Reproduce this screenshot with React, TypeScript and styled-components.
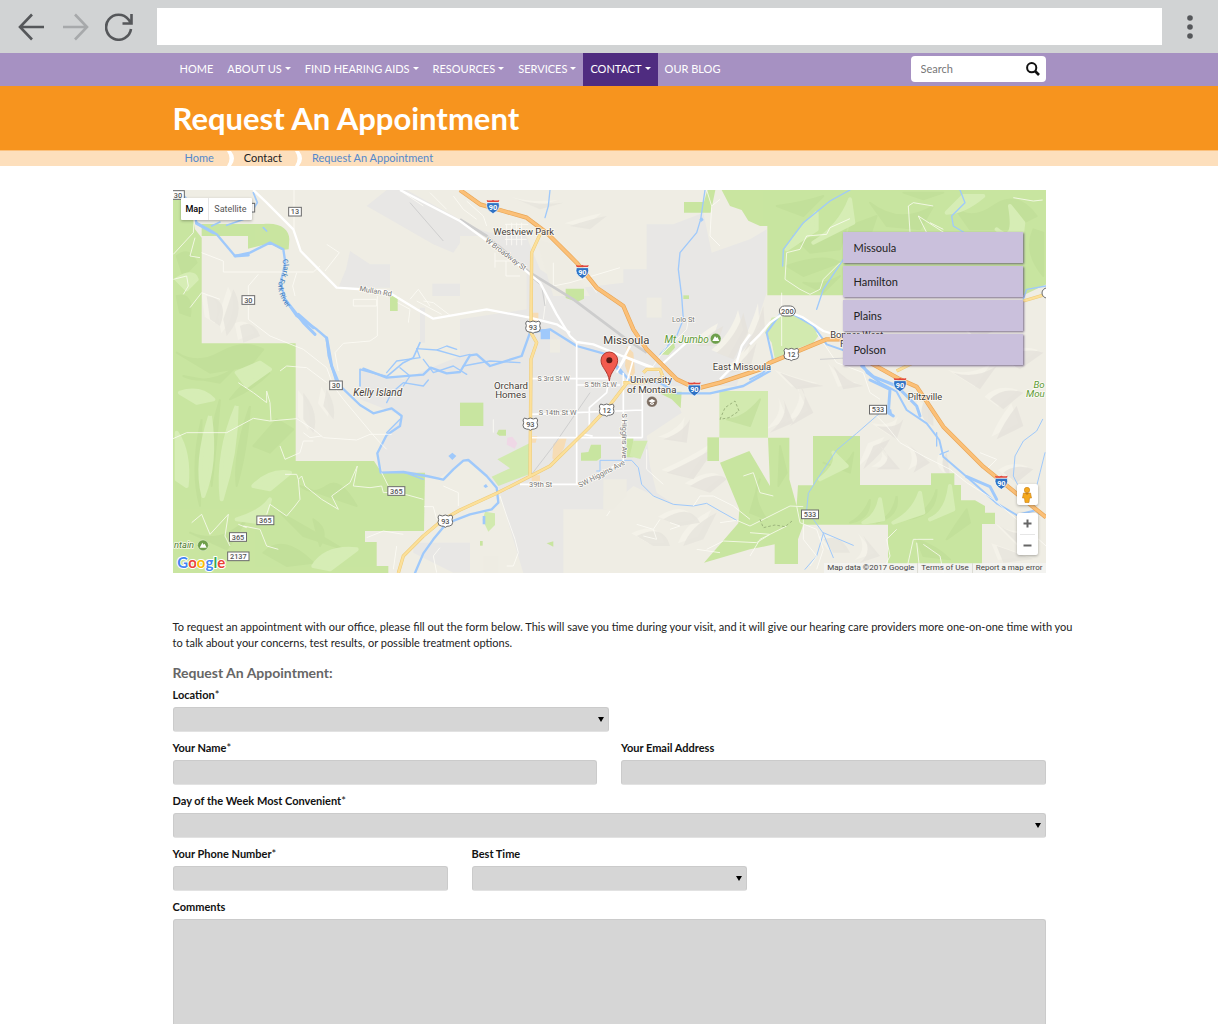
import React from "react";
import styled, { createGlobalStyle } from "styled-components";

const GlobalStyle = createGlobalStyle`
  *, *::before, *::after { box-sizing: border-box; }
  body { margin: 0; background: #fff; color: #222; font-family: Lato, "Liberation Sans", sans-serif; font-size: 11px; line-height: 16px; }
  button, input, select, textarea { font: inherit; color: inherit; }
`;

/* ---------- Browser frame ---------- */

const Window = styled.div`
  display: flex;
  flex-direction: column;
  height: 100vh;
`;

const Toolbar = styled.div`
  flex: none;
  display: flex;
  align-items: center;
  height: 53px;
  padding: 0 16px 0 18px;
  gap: 16px;
  background: #d1d3d4;
`;

const ToolButton = styled.button<{ $dim?: boolean }>`
  display: flex;
  padding: 0;
  border: 0;
  background: none;
  color: ${(p) => (p.$dim ? "#a7a9ab" : "#55575a")};
`;

const AddressBar = styled.input`
  flex: 1;
  min-width: 0;
  height: 37px;
  margin: 0 0 0 8px;
  padding: 0 12px;
  border: 0;
  background: #fff;
  font-size: 15px;
`;

const Viewport = styled.div`
  flex: 1;
  min-height: 0;
  overflow-y: auto;
  overflow-x: hidden;
  scrollbar-width: none;
`;

/* ---------- Site header ---------- */

const Container = styled.div`
  width: 100%;
  max-width: 873px;
  margin: 0 auto;
`;

const NavBand = styled.header`
  background: #a691c2;
`;

const NavRow = styled(Container)`
  display: flex;
  align-items: center;
  justify-content: space-between;
`;

const NavList = styled.ul`
  display: flex;
  margin: 0;
  padding: 0;
  list-style: none;
`;

const NavLink = styled.a<{ $active?: boolean }>`
  display: flex;
  align-items: center;
  gap: 3px;
  height: 33px;
  padding: 0 7px 2px;
  background: ${(p) => (p.$active ? "#4f2c80" : "transparent")};
  color: #fff;
  text-decoration: none;
  white-space: nowrap;
`;

const Caret = styled.span`
  border: 3px solid transparent;
  border-top-color: currentColor;
  border-bottom: 0;
`;

const SearchForm = styled.form`
  display: flex;
  align-items: center;
  width: 135px;
  height: 26px;
  margin-bottom: 1px;
  padding: 0 6px 0 10px;
  border-radius: 4px;
  background: #fff;
`;

const SearchInput = styled.input`
  flex: 1;
  min-width: 0;
  padding: 0;
  border: 0;
  outline: 0;
  background: none;
  &::placeholder { color: #777; }
`;

const SearchButton = styled.button`
  display: flex;
  padding: 0;
  border: 0;
  background: none;
  color: #111;
`;

const TitleBand = styled.div`
  background: #f7941e;
`;

const Title = styled.h1`
  margin: 0;
  padding: 12px 0;
  color: #fff;
  font-size: 31px;
  line-height: 40px;
  font-weight: 700;
`;

const CrumbBand = styled.nav`
  border-top: 1px solid #fbc07c;
  background: #fddfbc;
`;

const CrumbList = styled.ol`
  display: flex;
  align-items: center;
  gap: 10px;
  height: 15px;
  margin: 0;
  padding: 0 12px;
  list-style: none;
`;

const Crumb = styled.li`
  display: flex;
  align-items: center;
  gap: 13px;
  line-height: 14px;
`;

const CrumbLink = styled.a<{ $dark?: boolean }>`
  padding-bottom: 1px;
  color: ${(p) => (p.$dark ? "#222" : "#5488cb")};
  text-decoration: none;
`;

/* ---------- Map ---------- */

const Main = styled.main`
  padding: 24px 0;
`;

const MapFrame = styled.section`
  position: relative;
  height: 383px;
  overflow: hidden;
  background: #efede4;
  font-family: Roboto, "Liberation Sans", sans-serif;
`;

const MapCanvas = styled.svg`
  display: block;
  width: 100%;
  height: 100%;
`;

const MapTypes = styled.div`
  position: absolute;
  top: 8px;
  left: 8px;
  display: flex;
  height: 22px;
  border-radius: 1px;
  background: #fff;
  box-shadow: 0 1px 3px rgba(0, 0, 0, 0.3);
`;

const MapType = styled.button<{ $on?: boolean }>`
  padding: 0 5px;
  border: 0;
  border-left: ${(p) => (p.$on ? "0" : "1px solid #e6e6e6")};
  background: none;
  font-size: 9px;
  font-weight: ${(p) => (p.$on ? 500 : 400)};
  color: ${(p) => (p.$on ? "#000" : "#565656")};
`;

const Offices = styled.div`
  position: absolute;
  top: 42px;
  right: 23px;
  display: flex;
  flex-direction: column;
  gap: 3px;
  width: 180px;
`;

const Office = styled.button`
  height: 31px;
  padding: 0 11px;
  border: 0;
  background: #cac0dc;
  box-shadow: 1px 1px 2px rgba(60, 40, 90, 0.65);
  color: #222;
  font-family: Lato, "Liberation Sans", sans-serif;
  text-align: left;
`;

const MapTools = styled.div`
  position: absolute;
  right: 8px;
  bottom: 18px;
  display: flex;
  flex-direction: column;
  gap: 8px;
  width: 21px;
`;

const ToolCard = styled.div`
  display: flex;
  flex-direction: column;
  padding: 0 3px;
  border-radius: 2px;
  background: #fff;
  box-shadow: 0 1px 3px rgba(0, 0, 0, 0.3);
`;

const MapTool = styled.button`
  display: flex;
  align-items: center;
  justify-content: center;
  height: 21px;
  padding: 0;
  border: 0;
  background: none;
  & + & { border-top: 1px solid #e6e6e6; }
`;

const Attribution = styled.div`
  position: absolute;
  right: 0;
  bottom: 0;
  display: flex;
  height: 10px;
  background: rgba(245, 245, 245, 0.7);
  color: #444;
  font-size: 8px;
  line-height: 10px;
`;

const Credit = styled.span`
  padding: 0 3px;
  & + & { border-left: 1px solid #dcdcd4; }
  a { color: inherit; text-decoration: none; }
`;

/* ---------- Form ---------- */

/* The opening copy runs a little wider than the column of fields. */
const Intro = styled.p`
  margin: 46px -32px 12px 0;
`;

const FormTitle = styled.h2`
  margin: 0 0 4px;
  color: #666;
  font-size: 14px;
  line-height: 20px;
  font-weight: 700;
`;

const Form = styled.form`
  display: flex;
  flex-direction: column;
  gap: 8px;
`;

const Row = styled.div<{ $cols: number; $gap?: number }>`
  display: grid;
  grid-template-columns: repeat(${(p) => p.$cols}, minmax(0, 1fr));
  gap: ${(p) => p.$gap ?? 24}px;
`;

const Field = styled.div`
  display: flex;
  flex-direction: column;
  gap: 4px;
`;

const Label = styled.label`
  color: #111;
  font-weight: 700;
`;

const Star = styled.span`
  font-weight: 400;
`;

const Control = styled.input`
  width: 100%;
  height: 25px;
  padding: 2px 8px;
  border: 1px solid #cbcbcb;
  border-bottom-color: #e2e2e2;
  border-radius: 3px;
  background: #d6d6d6;
`;

const SelectWrap = styled.div`
  position: relative;
  &::after {
    content: "";
    position: absolute;
    top: 10px;
    right: 5px;
    border: 3px solid transparent;
    border-top: 5px solid #000;
    border-bottom: 0;
    pointer-events: none;
  }
`;

const SelectControl = styled(Control)`
  display: block;
  appearance: none;
`;

const TextControl = styled(Control)`
  display: block;
  height: 160px;
  resize: none;
`;

/* ---------- Map artwork ---------- */

const GREEN = "#c9e5a0";
const WATER = "#9fc9fb";

const parks = [
  "M9 40H60L75 130L95 155V472H377V825H612L635 860H765L762 1035H585V1068H620V1140H655V1161H9Z",
  "M95 114H280C330 108 358 130 358 160L356 190L335 192L300 172L234 188V150H95Z",
  "M660 330h23v45h-23Z",
  "M870 650h70v70h-70Z",
  "M1542 48h60l10 -36h24l-14 68h-80Z",
  "M1655 12H2640V290L2560 328H1792V120H1770L1735 104L1715 72L1680 60Z",
  "M1187 308h55v30l-20 10l-35 -12Z",
  "M1540 328h17v11h-17Z",
  "M1512 470L1470 505L1495 507L1515 485Z",
  "M1460 617H1535L1532 667L1505 640Z",
  "M1612 754h35v71h-35Z",
  "M1650 830L1738 795L1800 900L1794 755H1858V880L1880 960L1884 898H1929V750H2070V897H2283V862H2353V897H2373V943H2415L2445 960V980H2475V1014H2436V1134H2154V1016H1900L1884 1060V1134H1814V1075L1740 1090L1602 1130L1705 1012L1708 970Z",
  "M1370 754h20v60h-20Z",
  "M1233 800l22 -2l8 -22h30v40l-12 8h-48Z",
  "M1008 757v-8h-20l-8 -6l6 -12h22Z",
  "M930 1065h8v14h-8Z",
  "M1130 1072l20 -6v16Z",
];

const paleParks = [
  "M1648 615h146v140h-146Z",
  "M1390 764h43l-22 55l-32 -8Z",
  "M982 820L1078 772V865L985 900L965 872L1020 847Z",
  "M945 977L975 982V1017L955 1037L938 1002Z",
  "M1805 395L1865 385L1925 410L1945 450L1930 470L1860 495L1815 520L1805 470L1785 440Z",
];

const urban = [
  "M870 110L960 140L1060 130L1110 250L1200 310L1360 290V250H1430V115H1510L1600 80L1625 200L1740 160L1790 130V320L1740 470L1700 600H1500L1535 680L1430 750L1440 840L1460 920L1520 960L1390 900L1310 970H1180V1161H1060L1000 960L985 900L890 820L800 880L640 860L620 800L650 740L700 690L570 640L570 545L700 580L870 510V430Z",
  "M540 195L600 235H660V305H505L528 250Z",
  "M787 293h100v37h-100Z",
  "M750 365h15v105h-15Z",
  "M650 12H710L905 120L850 200L790 175L590 60Z",
  "M730 1070h170v90h-50l-120 -60Z",
];

const clearings = [
  "M870 150L960 150L1070 260V370L870 400Z",
  "M1300 880h70v50l-40 40h-30Z",
  "M1140 460h30v40h-30Z",
  "M1430 335h45v60h-45Z",
  "M940 1110h45v50h-45Z",
  "M1100 160L1170 180L1260 330H1150Z",
];

/* Terrain relief: slivers of shade and light, each filled from crest to foot. */
const greenShade = [
  "M95 700Q60 850 90 960Q90 850 95 700M150 640Q110 760 125 900Q140 760 150 640M240 660Q190 800 200 900Q230 800 240 660M300 560Q230 570 180 640Q250 610 300 560",
  "M20 500Q80 540 150 500T280 490L240 540L120 560ZM40 570Q110 600 190 550L150 590Z",
  "M390 900Q430 930 470 900T560 960L500 940ZM330 980Q420 1030 520 1090L400 1050ZM60 1040Q150 1080 230 1000L170 1090Z",
  "M280 1100Q340 1040 430 1130L350 1140ZM430 1000Q480 1030 450 1080ZM250 780L320 700L370 730L300 800Z",
  "M1820 60Q1900 50 1960 30L1900 90ZM1870 150Q1990 180 2040 90L2010 190L1920 200ZM1850 240Q1960 200 2010 230L1900 270ZM2100 50Q2190 120 2290 60L2250 130L2150 120Z",
  "M2350 60Q2400 110 2470 60T2600 90L2520 130L2400 130ZM2590 130Q2560 200 2620 270V140ZM2200 20H2320L2260 40ZM1900 290Q1960 300 2010 270L1960 320ZM2040 120L2120 90L2100 150L2030 180Z",
  "M1960 830Q2020 860 2050 800L2040 860ZM2100 940Q2080 990 2040 1010Q2100 1000 2100 940M2180 930Q2170 990 2120 1010Q2190 990 2180 930M2300 910Q2280 980 2210 1000Q2300 990 2300 910M2390 970Q2360 1010 2330 1060L2400 1010ZM2240 1060Q2300 1080 2340 1120L2260 1110Z",
  "M1670 700Q1720 700 1770 640L1740 720ZM1770 880Q1740 930 1790 1000L1740 980ZM1830 780L1850 860L1825 900Z",
  "M20 210Q60 180 80 230L40 270ZM20 330Q70 320 60 390L30 380Z",
];

const greenLight = [
  "M120 690Q75 830 100 930Q140 830 120 690M200 660Q140 800 155 940Q200 800 200 660M20 740Q60 800 50 900L20 880Z",
  "M250 900Q300 850 360 860L300 910ZM200 1000Q270 980 300 940L280 1010ZM430 1140Q470 1080 560 1090L480 1150Z",
  "M1940 80Q1890 130 1850 190L1940 130ZM2040 40Q2010 120 1930 170L2050 110ZM2440 30Q2380 80 2330 80L2380 30ZM2480 130Q2540 180 2520 60L2560 110L2550 190Z",
  "M2130 940Q2120 990 2080 1010L2140 1000ZM2250 920Q2230 980 2170 1010L2260 980ZM2340 900Q2330 980 2280 1000L2350 970ZM1990 800Q2010 830 1950 880L2030 840Z",
  "M20 280Q70 250 80 280L50 310ZM30 620Q90 600 130 640L80 650ZM200 560L270 530L300 550L230 600Z",
];

const hillShade = [
  "M110 330Q180 340 150 420L120 400ZM190 310Q230 380 170 450L160 400ZM210 420Q250 400 270 450L220 470ZM400 620Q450 680 430 740L400 700ZM470 610Q500 660 490 700L460 660Z",
  "M1640 500Q1700 450 1720 380L1735 440L1690 520ZM1580 480Q1620 440 1660 420L1640 480ZM1720 500Q1760 430 1780 360L1785 430ZM1680 560Q1740 500 1760 470L1740 550Z",
  "M1480 760Q1540 740 1560 700L1550 770ZM1490 860Q1580 820 1640 780L1570 880ZM1560 900Q1640 850 1670 880L1620 920ZM1480 1000Q1560 950 1590 1010L1530 1020ZM1400 1050Q1480 1010 1500 1080L1450 1080ZM1540 1080Q1560 1020 1640 980L1600 1060Z",
  "M1840 640Q1860 690 1800 740L1870 710ZM1890 600Q1930 640 1860 720L1930 680ZM1830 560Q1880 580 1960 600L1880 610ZM1990 540Q2030 590 2080 600L2020 610Z",
  "M2130 780Q2180 820 2120 850L2190 850ZM2210 770Q2260 810 2230 860L2280 830ZM2330 800Q2300 840 2340 870ZM2080 850Q2140 800 2160 760L2110 780Z",
  "M2380 420Q2440 400 2500 420L2420 460ZM2500 520Q2560 480 2620 500L2550 550ZM2460 640Q2500 600 2560 620L2500 670ZM2540 660Q2500 710 2480 760L2560 720ZM2350 560Q2420 580 2480 540L2430 610Z",
  "M1960 1060Q2010 1040 2040 1100L1990 1100ZM2080 1050Q2110 1100 2070 1130L2130 1110ZM2490 1020Q2550 1060 2600 1030L2560 1090ZM2480 1080Q2540 1100 2590 1120L2500 1130Z",
  "M2500 860Q2540 830 2590 850L2540 890ZM2120 720Q2180 730 2200 700L2180 760ZM2260 650Q2240 700 2290 720L2290 670ZM1040 40Q1100 60 1180 50L1110 70ZM1200 120Q1260 100 1310 90L1260 130Z",
];

const rivers = [
  { d: "M30 15L65 60L80 112L140 145L195 210L240 200L300 170L340 190L346 230L332 290L345 340L380 390L440 430L470 456L476 510L500 590L570 657L610 682L665 667L695 690L690 720L650 747L622 802L632 860L700 858L770 870L820 881L850 850L880 824L895 822L950 870L980 905L985 950L965 970L900 985L830 1012L790 1060L760 1102L735 1161", w: 7 },
  { d: "M80 112L130 140M195 210L235 207M345 340L400 410L435 445M385 385L430 425M470 456L485 540L505 590", w: 9 },
  { d: "M570 600V550L650 572L700 530L730 515L750 470", w: 5 },
  { d: "M580 548L650 575L760 566L782 545L830 562L870 558L900 508L920 505L960 540L1055 510L1080 440L1140 430L1220 480L1310 505L1345 545L1380 585L1470 590L1520 622L1620 622L1720 600L1800 555", w: 7 },
  { d: "M650 560L680 525L750 515L740 488L800 492L870 512L900 505M690 545L720 570L700 600M760 520L790 560L850 540L890 565M800 492L830 480L860 490M880 540L960 525L1050 530M650 650L665 620L700 590L760 600L775 582", w: 4 },
  { d: "M650 740L690 700M700 858L760 880", w: 4 },
  { d: "M1740 580L1780 560L1808 520L1790 440L1830 385L1870 385L1930 420L1970 475L2070 510L2090 560L2130 590L2180 617L2210 672L2270 712L2308 762L2320 812L2390 872L2480 952L2540 987L2600 972", w: 6 },
  { d: "M2075 540L2110 572L2180 600L2240 660L2250 690M2100 582L2160 610L2155 680L2170 690M2390 872L2460 902L2480 940", w: 9 },
  { d: "M2310 805L2335 795M2300 740V780M2550 1000L2600 982L2628 990", w: 4 },
  { d: "M1140 12L1135 60L1125 95M1605 12L1592 100L1580 140L1530 200L1525 250L1535 330L1540 400L1520 450L1470 505", w: 4 },
  { d: "M1280 855H1290V823H1385L1405 845L1415 895L1450 930L1510 955L1570 960L1610 952L1650 975L1700 1003", w: 3 },
  { d: "M2040 12L1980 45L1900 110L1840 190L1838 240M2370 12L2385 50L2345 90L2350 120L2400 150M2628 300L2570 310L2560 340M1940 370L1960 310L2020 220", w: 4 },
  { d: "M2140 672L2060 742L2000 792L1940 882L1915 922L1910 972L1960 1042L1990 1115M1960 1042L1940 1110L1905 1150M2050 1078L1960 1040", w: 3 },
  { d: "M2618 700L2600 735L2560 765L2535 810L2530 870L2545 900M2625 800L2610 860L2600 900", w: 3 },
  { d: "M250 20L262 50L235 95L170 118M125 120L150 108M280 125L290 135", w: 5 },
];

const trails = [
  "M75 60L70 140L10 205M75 155L60 210L90 215M10 280L50 270L55 300L40 325M60 365L95 320L150 340M95 200L160 225V258H430L450 240M235 400V300L265 265M235 400L300 450L400 490L470 545L490 600L520 640L612 750L630 770L650 790",
  "M372 12V130M380 260L368 300L375 330M470 175L508 200L465 255M505 555L495 500L520 472L600 465L622 450V330M550 340H620V360H550ZM683 350L720 370L715 410",
  "M720 340L745 310L780 360M740 345L815 385M760 345L790 350L840 388M330 555L350 540L410 545L470 590",
  "M9 758L50 740L170 740L250 697L300 705L380 698L430 730L460 755L560 762L600 745L665 745M400 740L420 755L455 750M205 590L250 620L290 650V615L300 650L303 705M330 780L345 820L390 800L400 765H430",
  "M345 865H380L385 880L395 870L405 900L455 940L505 970L485 930L540 890L562 840L550 900L600 905L635 900L640 920L680 918L760 940M385 880L390 940L375 960L350 990L300 955L290 985",
  "M65 1010L95 985L120 1045L175 985L165 1050L180 1080M220 1020L270 1030L290 1080L325 1090M230 1025L205 1015M635 860L655 900L680 910M820 900L865 920V960M762 962H790L800 1000M800 1160L790 1110L810 1085M680 1080L670 1150M590 1055L640 1035L700 1045",
  "M970 700V740M990 930L1010 990L1035 1060L1045 1100L1030 1140H1010",
  "M1430 790V850L1480 895M1400 1015L1450 1030L1460 1060L1420 1050M1450 1030L1470 1000M1310 990L1320 975M1500 1030L1530 1020L1500 1010",
  "M1570 960L1590 930H1630L1690 960L1740 1000M1650 1010L1700 1003L1740 1020L1860 960L1900 962M1610 1090L1660 1065L1760 1070L1800 1045L1740 1040M1740 1110L1770 1060L1850 1020M1720 870L1750 860L1770 920L1810 930M1650 1100L1580 1090",
  "M1900 990V1060L1940 1110L1920 1140M1880 960L1890 1010L1940 1030L1960 1090L1940 1150M2135 1160L2160 1110L2150 1060L2180 1030M2210 1150L2230 1060L2290 1060M2240 1070L2250 1160M2260 1075L2310 1110L2320 1160",
  "M1835 480V320M2040 98L1980 125L1970 145L1910 150L1890 190L1850 200L1845 280L1890 310L1920 325L1950 310L1960 280L2010 230M2215 60L2230 50L2290 60M2215 60L2220 140M2245 90L2330 145M2245 90L2270 140M2280 110L2320 130M2530 35L2590 45L2618 42",
  "M1470 510L1550 430L1555 400M1450 540L1490 480M1610 12L1625 60L1620 150L1650 180M1625 60L1650 40M1010 115V178M1025 110V178M1040 110V178M1055 110V178M1005 115H1075M1005 135H1072M1005 160H1070",
  "M975 225H1040M1008 225V270H1050M975 200V245M1150 300L1200 290L1350 245M1240 260L1280 320M880 70L920 100M890 45L940 90L950 120M1150 300V230M1130 320L1120 400M700 20L760 60M780 20L830 70M850 30L880 70",
  "M2120 690L2150 720L2190 770L2260 810L2340 850L2390 890L2470 940L2540 1000L2628 1080M1940 440L2000 530L2080 560L2100 620L2130 640M2430 800L2480 820L2450 850L2480 880",
];

const streets = [
  "M250 12L290 50L370 130L392 195L500 305L650 315L740 370L790 398L950 370L1080 395L1160 415L1200 440",
  "M690 12L870 105L1020 215L1110 290L1160 385L1200 450L1220 468L1270 475L1430 540L1470 555",
  "M1470 540L1560 460M1350 540L1380 480M1360 510L1450 545",
];

const grid = [
  "M1220 468V897M1080 578H1320M1220 597H1350M1080 685L1417 672M1080 755H1417M1417 600V755M1050 895H1222L1360 827V560M1320 560L1310 620L1258 665V720M1240 745L1268 750",
  "M1370 510L1340 560M1390 520L1370 590",
];

const HIGHWAY = "M870 12L930 55L1000 75L1070 95L1130 140L1220 230L1280 305L1360 360L1390 430L1430 490L1520 580L1580 608L1650 590L1770 550L1800 530L1970 460H2020L2100 530L2190 580L2240 602L2320 722L2440 842L2628 994";
const STATE_ROAD = "M1110 145L1085 200L1083 440L1100 470L1083 520L1080 872M1370 592L1320 657L1255 727L1140 840L980 922L870 972L820 1000L760 1050L700 1110L685 1161M1420 560L1430 550H1470L1480 575L1410 590H1360M2180 555L2250 520M2560 345L2628 325";

type Mark = { x: number; y: number; t: string };

const countyMarks: Mark[] = [
  { x: 24, y: 27, t: "30" }, { x: 375, y: 77, t: "13" }, { x: 235, y: 342, t: "30" }, { x: 498, y: 598, t: "30" },
  { x: 679, y: 915, t: "365" }, { x: 286, y: 1003, t: "365" }, { x: 204, y: 1053, t: "365" }, { x: 205, y: 1111, t: "2137" },
  { x: 2124, y: 671, t: "533" }, { x: 1920, y: 985, t: "533" },
];
const usMarks: Mark[] = [
  { x: 1089, y: 423, t: "93" }, { x: 1081, y: 714, t: "93" }, { x: 826, y: 1005, t: "93" }, { x: 1310, y: 672, t: "12" }, { x: 1864, y: 505, t: "12" },
];
const interstateMarks: Mark[] = [
  { x: 969, y: 62, t: "90" }, { x: 1237, y: 257, t: "90" }, { x: 1573, y: 609, t: "90" }, { x: 2190, y: 596, t: "90" }, { x: 2494, y: 889, t: "90" },
];

type Place = Mark & { s?: number; c?: string; r?: number; i?: boolean; a?: "start" | "end" };
const places: Place[] = [
  { x: 1061, y: 146, t: "Westview Park", s: 28 }, { x: 1369, y: 473, t: "Missoula", s: 34 },
  { x: 1443, y: 591, t: "University" }, { x: 1445, y: 621, t: "of Montana" },
  { x: 1023, y: 610, t: "Orchard" }, { x: 1022, y: 637, t: "Homes" },
  { x: 1716, y: 551, t: "East Missoula", s: 28 }, { x: 2265, y: 641, t: "Piltzville", s: 28 },
  { x: 2060, y: 456, t: "Bonner-West", s: 28 }, { x: 2010, y: 483, t: "R", a: "start" },
  { x: 623, y: 629, t: "Kelly Island", i: true, s: 30 },
  { x: 1550, y: 470, t: "Mt Jumbo", c: "#5c9a35", i: true, s: 30 },
  { x: 2624, y: 605, t: "Bo", c: "#5c9a35", i: true, a: "end" }, { x: 2624, y: 634, t: "Mou", c: "#5c9a35", i: true, a: "end" },
  { x: 12, y: 1086, t: "ntain", c: "#4f7d33", i: true, s: 28, a: "start" },
  { x: 616, y: 323, t: "Mullan Rd", s: 22, c: "#767676", r: 10 },
  { x: 1003, y: 210, t: "W Broadway St", s: 22, c: "#767676", r: 37 },
  { x: 1540, y: 408, t: "Lolo St", s: 22, c: "#767676" },
  { x: 1151, y: 586, t: "S 3rd St W", s: 21, c: "#767676" }, { x: 1292, y: 604, t: "S 5th St W", s: 21, c: "#767676" },
  { x: 1163, y: 688, t: "S 14th St W", s: 22, c: "#767676" }, { x: 1112, y: 904, t: "39th St", s: 22, c: "#767676" },
  { x: 1298, y: 870, t: "SW Higgins Ave", s: 22, c: "#767676", r: -27 },
  { x: 1355, y: 750, t: "S Higgins Ave", s: 22, c: "#767676", r: 90 },
];

function MountainIcon({ x, y }: { x: number; y: number }) {
  return (
    <g transform={`translate(${x} ${y})`}>
      <circle r="16" fill="#6e9f4b" stroke="#fff" strokeWidth="1" />
      <path d="M-10 7L-2 -8L2 -2L5 -5L11 7Z" fill="#fff" />
    </g>
  );
}

function MapArt() {
  return (
    <MapCanvas viewBox="9 12 2619 1149" preserveAspectRatio="xMidYMid slice" role="img" aria-label="Map of Missoula">
      <defs>
        <clipPath id="greens">
          {[...parks, ...paleParks].map((d) => <path key={d} d={d} />)}
        </clipPath>
      </defs>
      <rect x="0" y="0" width="2640" height="1170" fill="#efede4" />
      <g fill="#e8e7e5">{urban.map((d) => <path key={d} d={d} />)}</g>
      <g fill="#eeece3">{clearings.map((d) => <path key={d} d={d} />)}</g>
      <g fill="#f4f2e9" transform="translate(-16 -8)">{hillShade.map((d) => <path key={d} d={d} />)}</g>
      <g fill="#e6e3dc" opacity="0.8">{hillShade.map((d) => <path key={d} d={d} />)}</g>
      <g fill={GREEN}>{parks.map((d) => <path key={d} d={d} />)}</g>
      <g fill="#d2eab0">{paleParks.map((d) => <path key={d} d={d} />)}</g>
      <g clipPath="url(#greens)" strokeLinejoin="round">
        <g fill="#bfdc97" stroke="#bfdc97" strokeWidth="6" opacity="0.6">{greenShade.map((d) => <path key={d} d={d} />)}</g>
        <g fill="#d6edb5" stroke="#d6edb5" strokeWidth="12">{greenLight.map((d) => <path key={d} d={d} />)}</g>
      </g>
      <g fill="#f6dcb5">
        <path d="M1150 775l20 -18h20l-8 30l-25 40l-10 -10ZM1082 750h20l-5 20h-15ZM1085 868h25v18h-25ZM1085 380h20v25h-20ZM1370 480l20 20l5 60l-15 20l-15 -40Z" />
        <path d="M1012 755l15 -3l15 20l-8 16l-24 -12Z" fill="#efd8e6" />
      </g>
      <g fill={WATER}>
        <path d="M1112 430h28v30h-28ZM1332 540l22 10l10 20l-15 -6ZM835 810l12 -10l12 10l-12 12ZM940 900l8 -6l6 8l-8 4ZM938 990h8v25h-8ZM2152 680l15 8l-4 -20ZM1588 100l8 -6l5 8l-8 6Z" />
      </g>
      <g fill="none" stroke={WATER} strokeLinejoin="round" strokeLinecap="round">
        {rivers.map((r) => <path key={r.d} d={r.d} strokeWidth={r.w} />)}
      </g>
      <g fill="none" stroke="#fffef8" strokeWidth="3" strokeLinejoin="round" opacity="0.75">
        {trails.map((d) => <path key={d} d={d} />)}
      </g>
      <g fill="none" strokeLinejoin="round">
        <path d="M870 100L950 150L1080 260L1210 340L1370 460L1430 500" stroke="#cdcdcd" strokeWidth="8" />
        <path d="M720 50L820 165M1085 865L1150 780L1260 620M1085 275L1115 300L1125 360" stroke="#cfcfcf" strokeWidth="3" />
        <path d="M1950 520L2050 515L2240 530" stroke="#cfcfcf" strokeWidth="3" />
        <g stroke="#fff" strokeWidth="5">{grid.map((d) => <path key={d} d={d} />)}</g>
        <g stroke="#fff" strokeWidth="7">{streets.map((d) => <path key={d} d={d} />)}</g>
        <path d="M1740 475L1770 445L1800 410L1850 375L1900 395L1960 435L2010 450M1740 445L1715 480L1700 530L1650 580" stroke="#fff" strokeWidth="7" />
        <path d={STATE_ROAD} stroke="#edcb79" strokeWidth="10" />
        <path d={STATE_ROAD} stroke="#fce09a" strokeWidth="7" />
        <path d={HIGHWAY} stroke="#e9a656" strokeWidth="13" />
        <path d={HIGHWAY} stroke="#fbc078" strokeWidth="9" />
        <path d="M1650 700l15 -35l30 -20l12 30l-30 20ZM1770 1000l10 25l35 -8l30 5l25 -20" stroke="#9db57d" strokeWidth="3" strokeDasharray="8 6" />
      </g>

      <g fontFamily="Roboto, sans-serif" textAnchor="middle">
        <rect x="216" y="52" width="38" height="26" fill="#fff" stroke="#6a6a6a" strokeWidth="3" />
        {countyMarks.map((m) => {
          const w = m.t.length * 13 + 12;
          return (
            <g key={`${m.x}-${m.y}`}>
              <rect x={m.x - w / 2} y={m.y - 13} width={w} height="26" fill="#fff" stroke="#6a6a6a" strokeWidth="3" />
              <text x={m.x} y={m.y + 8} fontSize="22" fontWeight="500" fill="#555">{m.t}</text>
            </g>
          );
        })}
        {usMarks.map((m) => (
          <g key={`${m.x}-${m.y}`} transform={`translate(${m.x} ${m.y})`}>
            <path d="M-18 -18Q-9 -12 0 -18Q9 -12 18 -18L22 -12Q18 -4 22 4Q22 14 12 15Q4 15 0 19Q-4 15 -12 15Q-22 14 -22 4Q-18 -4 -22 -12Z" fill="#fff" stroke="#6a6a6a" strokeWidth="3" />
            <text y="8" fontSize="22" fontWeight="500" fill="#555">{m.t}</text>
          </g>
        ))}
        <rect x="1828" y="360" width="48" height="30" rx="15" fill="#fff" stroke="#6a6a6a" strokeWidth="3" />
        <text x="1852" y="383" fontSize="22" fontWeight="500" fill="#555">200</text>
        <rect x="2616" y="306" width="48" height="30" rx="15" fill="#fff" stroke="#6a6a6a" strokeWidth="3" />
        {interstateMarks.map((m) => (
          <g key={m.x} transform={`translate(${m.x} ${m.y})`}>
            <path d="M-18 -12H18Q24 8 0 21Q-24 8 -18 -12Z" fill="#2f72c4" stroke="#fff" strokeWidth="2" />
            <path d="M-17 -14L-19 -20Q-9 -17 0 -20Q9 -17 19 -20L17 -14Z" fill="#e2453c" />
            <text y="10" fontSize="22" fontWeight="700" fill="#fff">{m.t}</text>
          </g>
        ))}
        <g strokeLinejoin="round" paintOrder="stroke">
          {places.map((p) => (
            <text key={`${p.t}-${p.x}`} x={p.x} y={p.y} fontSize={p.s ?? 29} fontStyle={p.i ? "italic" : "normal"} textAnchor={p.a ?? "middle"}
              fill={p.c ?? "#453e3a"} stroke="#fffdf8" strokeOpacity="0.85" strokeWidth="5" transform={p.r ? `rotate(${p.r} ${p.x} ${p.y})` : undefined}>
              {p.t}
            </text>
          ))}
        </g>
        <path id="clark-fork" d="M336 222Q348 245 330 280T356 372" fill="none" />
        <text fontSize="22" fill="#3e7cbd" textAnchor="start"><textPath href="#clark-fork">Clark Fork River</textPath></text>
      </g>

      <MountainIcon x={1637} y={458} />
      <MountainIcon x={99} y={1078} />
      <g transform="translate(1446 647)">
        <circle r="16" fill="#7a6b5f" stroke="#fff" strokeWidth="1" />
        <path d="M-11 -2L0 -8L11 -2L0 4ZM-6 3L0 6L6 3V7L0 10L-6 7Z" fill="#fff" />
      </g>

      <g transform="translate(1318 525)">
        <path d="M0 60C-3 30 -25 20 -25 -2A25 25 0 0 1 25 -2C25 20 3 30 0 60Z" fill="#f25b4f" stroke="#b0362d" strokeWidth="3" />
        <circle cy="-2" r="9" fill="#5a1a15" />
      </g>

      <text x="22" y="1145" fontFamily="Lato, sans-serif" fontSize="45" fontWeight="700" stroke="#fff" strokeWidth="6" paintOrder="stroke" strokeLinejoin="round">
        <tspan fill="#4285f4">G</tspan><tspan fill="#ea4335">o</tspan><tspan fill="#fbbc05">o</tspan><tspan fill="#4285f4">g</tspan><tspan fill="#34a853">l</tspan><tspan fill="#ea4335">e</tspan>
      </text>
    </MapCanvas>
  );
}

/* ---------- Page ---------- */

const navItems = [
  { label: "HOME" },
  { label: "ABOUT US", menu: true },
  { label: "FIND HEARING AIDS", menu: true },
  { label: "RESOURCES", menu: true },
  { label: "SERVICES", menu: true },
  { label: "CONTACT", menu: true, active: true },
  { label: "OUR BLOG" },
];

const offices = ["Missoula", "Hamilton", "Plains", "Polson"];

function FieldLabel({ id, text, required }: { id: string; text: string; required?: boolean }) {
  return <Label htmlFor={id}>{text}{required && <Star>*</Star>}</Label>;
}

function SelectField({ id, text, required, options }: { id: string; text: string; required?: boolean; options: string[] }) {
  return (
    <Field>
      <FieldLabel id={id} text={text} required={required} />
      <SelectWrap>
        <SelectControl as="select" id={id} defaultValue="">
          <option value="" />
          {options.map((o) => <option key={o}>{o}</option>)}
        </SelectControl>
      </SelectWrap>
    </Field>
  );
}

function TextField({ id, text, required, type = "text" }: { id: string; text: string; required?: boolean; type?: string }) {
  return (
    <Field>
      <FieldLabel id={id} text={text} required={required} />
      <Control id={id} type={type} />
    </Field>
  );
}

function Chevron() {
  return (
    <svg width="7" height="15" viewBox="0 0 7 15" aria-hidden="true">
      <path d="M0 0H4Q10 7.500 4 15H0Q5 7.500 0 0Z" fill="#fff" />
    </svg>
  );
}

export default function App() {
  return (
    <Window>
      <GlobalStyle />
      <Toolbar>
        <ToolButton aria-label="Back">
          <svg width="27" height="28" viewBox="0 0 27 28" fill="none" stroke="currentColor" strokeWidth="2.600"><path d="M14 1.500L2 14L14 26.500M2 14H26" /></svg>
        </ToolButton>
        <ToolButton aria-label="Forward" $dim>
          <svg width="28" height="28" viewBox="0 0 28 28" fill="none" stroke="currentColor" strokeWidth="2.600"><path d="M14 1.500L26 14L14 26.500M26 14H2" /></svg>
        </ToolButton>
        <ToolButton aria-label="Reload">
          <svg width="28" height="28" viewBox="0 0 28 28" fill="none" stroke="currentColor" strokeWidth="2.600"><path d="M26 16A12.500 12.500 0 1 1 23.500 6.500L26 10M26.500 1V10.500H17.500" /></svg>
        </ToolButton>
        <AddressBar aria-label="Address" type="text" />
        <ToolButton aria-label="Menu">
          <svg width="24" height="26" viewBox="0 0 24 26" fill="currentColor"><circle cx="12" cy="4" r="2.800" /><circle cx="12" cy="13" r="2.800" /><circle cx="12" cy="22" r="2.800" /></svg>
        </ToolButton>
      </Toolbar>

      <Viewport>
        <NavBand>
          <NavRow>
            <nav aria-label="Main">
              <NavList>
                {navItems.map((n) => (
                  <li key={n.label}>
                    <NavLink href="#" $active={n.active}>{n.label}{n.menu && <Caret />}</NavLink>
                  </li>
                ))}
              </NavList>
            </nav>
            <SearchForm role="search">
              <SearchInput type="text" placeholder="Search" aria-label="Search" />
              <SearchButton type="button" aria-label="Submit search">
                <svg width="14" height="14" viewBox="0 0 14 14" fill="none" stroke="currentColor" strokeWidth="2"><circle cx="5.700" cy="5.700" r="4.600" /><path d="M9 9L13 13" strokeWidth="2.600" /></svg>
              </SearchButton>
            </SearchForm>
          </NavRow>
        </NavBand>
        <TitleBand>
          <Container><Title>Request An Appointment</Title></Container>
        </TitleBand>
        <CrumbBand aria-label="Breadcrumb">
          <Container>
            <CrumbList>
              <Crumb><CrumbLink href="#">Home</CrumbLink><Chevron /></Crumb>
              <Crumb><CrumbLink href="#" $dark>Contact</CrumbLink><Chevron /></Crumb>
              <Crumb><CrumbLink href="#">Request An Appointment</CrumbLink></Crumb>
            </CrumbList>
          </Container>
        </CrumbBand>

        <Main>
          <Container>
            <MapFrame>
              <MapArt />
              <MapTypes>
                <MapType $on>Map</MapType>
                <MapType>Satellite</MapType>
              </MapTypes>
              <Offices>
                {offices.map((o) => <Office key={o}>{o}</Office>)}
              </Offices>
              <MapTools>
                <ToolCard>
                  <MapTool aria-label="Street View">
                    <svg width="10" height="16" viewBox="0 0 10 16"><circle cx="5" cy="3" r="2.700" fill="#f5a81c" stroke="#c77f14" strokeWidth="0.600" /><path d="M1.500 6H8.500L9.500 11H7.500L7 15.500H3L2.500 11H0.500Z" fill="#f5a81c" stroke="#c77f14" strokeWidth="0.600" /><path d="M3 6H7L5 8Z" fill="#c77f14" /></svg>
                  </MapTool>
                </ToolCard>
                <ToolCard>
                  <MapTool aria-label="Zoom in">
                    <svg width="9" height="9" viewBox="0 0 9 9" stroke="#666" strokeWidth="2"><path d="M4.500 0.500V8.500M0.500 4.500H8.500" /></svg>
                  </MapTool>
                  <MapTool aria-label="Zoom out">
                    <svg width="9" height="9" viewBox="0 0 9 9" stroke="#666" strokeWidth="2"><path d="M0.500 4.500H8.500" /></svg>
                  </MapTool>
                </ToolCard>
              </MapTools>
              <Attribution>
                <Credit>Map data ©2017 Google</Credit>
                <Credit><a href="#">Terms of Use</a></Credit>
                <Credit><a href="#">Report a map error</a></Credit>
              </Attribution>
            </MapFrame>

            <Intro>
              To request an appointment with our office, please fill out the form below. This will save you time during your visit, and it will give our hearing care providers more one-on-one time with you to talk about your concerns, test results, or possible treatment options.
            </Intro>
            <FormTitle>Request An Appointment:</FormTitle>
            <Form>
              <Row $cols={2} $gap={0}>
                <SelectField id="location" text="Location" required options={offices} />
              </Row>
              <Row $cols={2}>
                <TextField id="name" text="Your Name" required />
                <TextField id="email" text="Your Email Address" type="email" />
              </Row>
              <Row $cols={1}>
                <SelectField id="day" text="Day of the Week Most Convenient" required options={["Monday", "Tuesday", "Wednesday", "Thursday", "Friday"]} />
              </Row>
              <Row $cols={3}>
                <TextField id="phone" text="Your Phone Number" required type="tel" />
                <SelectField id="time" text="Best Time" options={["Morning", "Afternoon"]} />
              </Row>
              <Row $cols={1}>
                <Field>
                  <FieldLabel id="comments" text="Comments" />
                  <TextControl as="textarea" id="comments" />
                </Field>
              </Row>
            </Form>
          </Container>
        </Main>
      </Viewport>
    </Window>
  );
}
